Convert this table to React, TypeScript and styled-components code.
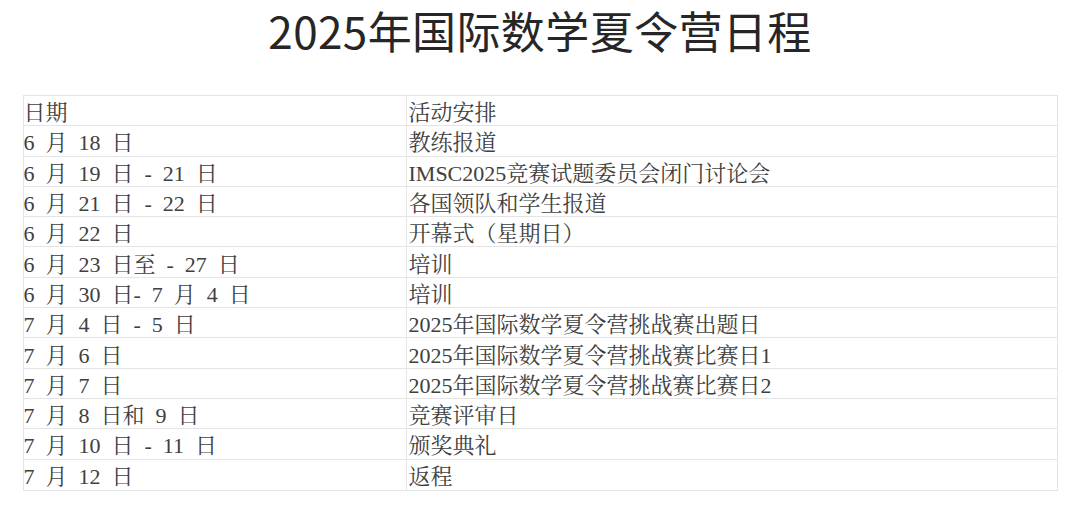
import React from "react";
import styled, { createGlobalStyle } from "styled-components";

const GlobalStyle = createGlobalStyle`
  html, body {
    margin: 0;
    padding: 0;
    background: #ffffff;
  }
  body {
    width: 1080px;
    height: 515px;
    overflow: hidden;
  }
`;

const Page = styled.div`
  width: 1080px;
  height: 515px;
  display: flex;
  flex-direction: column;
  align-items: center;
  background: #ffffff;
`;

const Title = styled.h1`
  margin: 0;
  height: 60px;
  line-height: 60px;
  font-family: "Noto Sans CJK SC", "Noto Sans", sans-serif;
  font-weight: 400;
  font-size: 44px;
  color: #262626;
  letter-spacing: 0.4px;
  white-space: nowrap;
`;

const Table = styled.div`
  margin-top: 35px;
  width: 1035px;
  display: grid;
  grid-template-columns: 382px 1fr;
  border: 1px solid #e4e4e4;
  box-sizing: border-box;
`;

const Cell = styled.div<{ $col: number; $last?: boolean }>`
  height: 30.3px;
  box-sizing: border-box;
  display: flex;
  align-items: center;
  padding-left: ${(p) => (p.$col === 0 ? "0px" : "2px")};
  border-left: ${(p) => (p.$col === 1 ? "1px solid #e6e6e6" : "none")};
  border-bottom: ${(p) => (p.$last ? "none" : "1px solid #e4e4e4")};
  font-family: "Liberation Serif", "Noto Serif CJK SC", "Noto Sans CJK SC", serif;
  font-size: 22px;
  color: #404040;
  word-spacing: 0.25em;
  white-space: nowrap;
  overflow: hidden;
`;

const rows: [string, string][] = [
  ["日期", "活动安排"],
  ["6 月 18 日", "教练报道"],
  ["6 月 19 日 - 21 日", "IMSC2025竞赛试题委员会闭门讨论会"],
  ["6 月 21 日 - 22 日", "各国领队和学生报道"],
  ["6 月 22 日", "开幕式（星期日）"],
  ["6 月 23 日至 - 27 日", "培训"],
  ["6 月 30 日- 7 月 4 日", "培训"],
  ["7 月 4 日 - 5 日", "2025年国际数学夏令营挑战赛出题日"],
  ["7 月 6 日", "2025年国际数学夏令营挑战赛比赛日1"],
  ["7 月 7 日", "2025年国际数学夏令营挑战赛比赛日2"],
  ["7 月 8 日和 9 日", "竞赛评审日"],
  ["7 月 10 日 - 11 日", "颁奖典礼"],
  ["7 月 12 日", "返程"],
];

export default function App() {
  return (
    <>
      <GlobalStyle />
      <Page>
        <Title>2025年国际数学夏令营日程</Title>
        <Table>
          {rows.map(([date, act], i) => {
            const last = i === rows.length - 1;
            return (
              <React.Fragment key={i}>
                <Cell $col={0} $last={last}>{date}</Cell>
                <Cell $col={1} $last={last}>{act}</Cell>
              </React.Fragment>
            );
          })}
        </Table>
      </Page>
    </>
  );
}
